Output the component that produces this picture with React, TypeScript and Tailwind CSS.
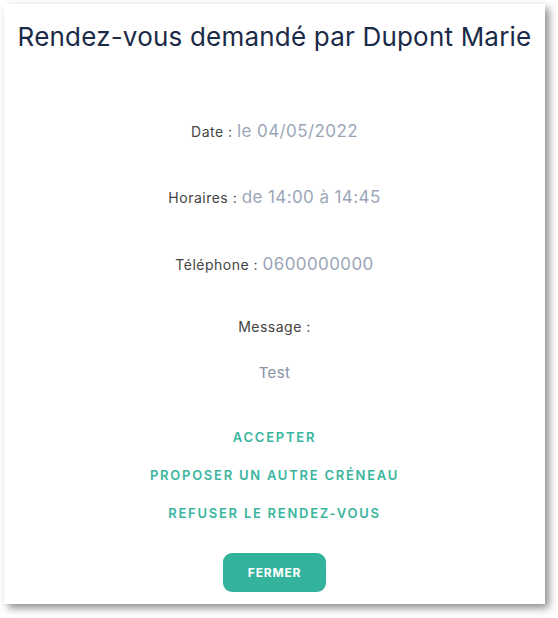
import React from "react";

const font = { fontFamily: "Inter, 'Open Sans', sans-serif" };

export default function App() {
  return (
    <div className="w-[558px] h-[618px] bg-white pt-[4px] pl-[4px]" style={font}>
      <div className="w-[541px] h-[600px] bg-white shadow-[4px_4px_8px_rgba(0,0,0,0.45)] flex flex-col items-center">
        <h1 className="pt-[17px] text-[26px] leading-[32px] font-normal tracking-[0.2px] text-[#1b2a47]">
          Rendez-vous demandé par Dupont Marie
        </h1>
        <div className="mt-[66px] h-[24px] flex items-baseline">
          <span className="text-[14px] tracking-[0.5px] text-[#444]">Date :&nbsp;</span>
          <span className="text-[17px] tracking-[0.4px] text-[#9ba6b8]">le 04/05/2022</span>
        </div>
        <div className="mt-[42px] h-[24px] flex items-baseline">
          <span className="text-[14px] tracking-[0.5px] text-[#444]">Horaires :&nbsp;</span>
          <span className="text-[17px] tracking-[0.4px] text-[#9ba6b8]">de 14:00 à 14:45</span>
        </div>
        <div className="mt-[43px] h-[24px] flex items-baseline">
          <span className="text-[14px] tracking-[0.5px] text-[#444]">Téléphone :&nbsp;</span>
          <span className="text-[17px] tracking-[0.4px] text-[#9ba6b8]">0600000000</span>
        </div>
        <div className="mt-[39px] h-[24px] leading-[24px] text-[14px] tracking-[0.5px] text-[#444]">Message :</div>
        <div className="mt-[22px] h-[24px] leading-[24px] text-[15px] tracking-[0.4px] text-[#8792a5]">Test</div>
        <div className="mt-[42px] h-[20px] leading-[20px] text-[13px] font-semibold tracking-[1.75px] text-[#3ab59e]">ACCEPTER</div>
        <div className="mt-[18px] h-[20px] leading-[20px] text-[13px] font-semibold tracking-[1.75px] text-[#3ab59e]">PROPOSER UN AUTRE CRÉNEAU</div>
        <div className="mt-[18px] h-[20px] leading-[20px] text-[13px] font-semibold tracking-[1.75px] text-[#3ab59e]">REFUSER LE RENDEZ-VOUS</div>
        <button className="mt-[30px] w-[103px] h-[39px] rounded-[9px] bg-[#33b39c] text-white text-[12px] font-bold tracking-[0.8px]">
          FERMER
        </button>
      </div>
    </div>
  );
}
